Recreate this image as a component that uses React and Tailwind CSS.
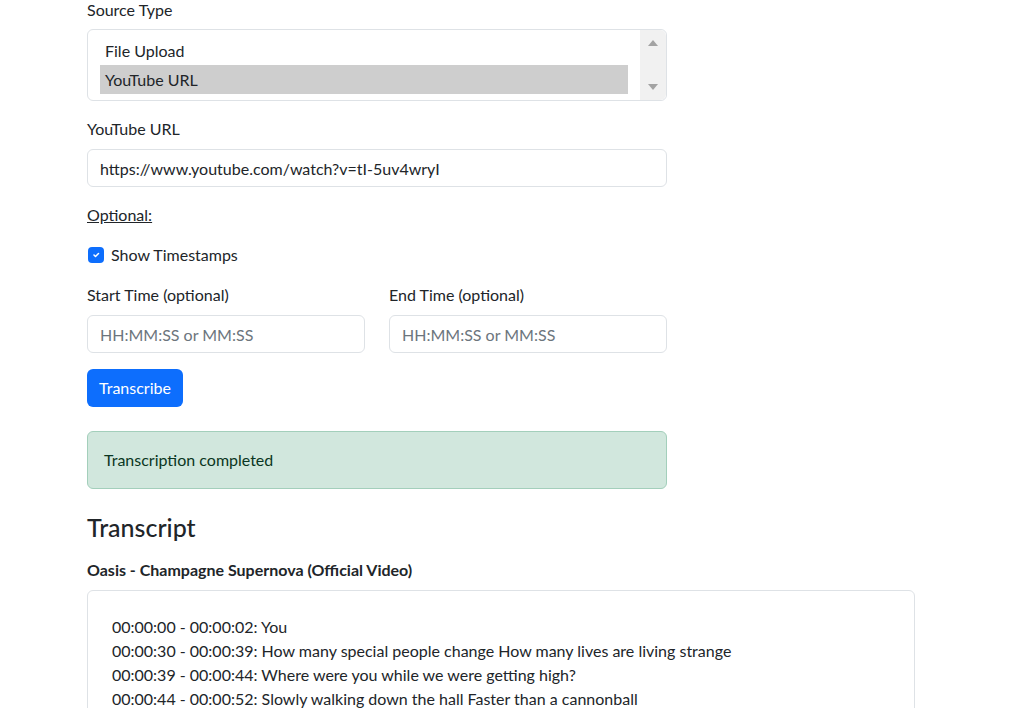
import { useState } from 'react';

const lines = [
  '00:00:00 - 00:00:02: You',
  '00:00:30 - 00:00:39: How many special people change How many lives are living strange',
  '00:00:39 - 00:00:44: Where were you while we were getting high?',
  '00:00:44 - 00:00:52: Slowly walking down the hall Faster than a cannonball',
];

export default function App() {
  const [source, setSource] = useState('youtube');
  const [showTs, setShowTs] = useState(true);

  return (
    <div className="h-[708px] overflow-hidden bg-white text-[16px] leading-6 text-[#212529] [font-family:'Segoe_UI',Lato,'Noto_Sans',sans-serif]">
      <div className="ml-[87px] mt-[-2px] w-[828px]">
        <div className="w-[580px]">
          {/* Source type */}
          <label className="mb-[7px] block">Source Type</label>
          <div className="flex h-[72px] rounded-md border border-[#dee2e6] bg-white">
            <div className="flex-1 pl-3 pt-[6px]">
              <div
                onClick={() => setSource('file')}
                className={`h-[29px] pl-[5px] leading-[29px] ${source === 'file' ? 'bg-[#cecece]' : ''}`}
              >
                File Upload
              </div>
              <div
                onClick={() => setSource('youtube')}
                className={`h-[29px] pl-[5px] leading-[29px] ${source === 'youtube' ? 'bg-[#cecece]' : ''}`}
              >
                YouTube URL
              </div>
            </div>
            <div className="ml-3 flex w-[26px] flex-col items-center justify-between rounded-r-md bg-[#f1f1f1] py-[10px]">
              <svg width="10" height="6" viewBox="0 0 10 6"><path d="M5 0L10 6H0z" fill="#a3a3a3" /></svg>
              <svg width="10" height="6" viewBox="0 0 10 6"><path d="M0 0h10L5 6z" fill="#a3a3a3" /></svg>
            </div>
          </div>

          {/* YouTube URL */}
          <label className="mt-[16px] mb-2 block">YouTube URL</label>
          <input
            defaultValue="https://www.youtube.com/watch?v=tI-5uv4wryI"
            className="block h-[38px] w-full rounded-md border border-[#dee2e6] px-3 text-[16px] text-[#212529] outline-none"
          />

          <div className="mt-4 underline">Optional:</div>

          <label className="mt-4 flex items-center gap-2">
            <span
              onClick={() => setShowTs(!showTs)}
              className={`ml-[1px] flex h-4 w-4 items-center justify-center rounded-[4px] ${showTs ? 'bg-[#0d6efd]' : 'border border-[#dee2e6]'}`}
            >
              {showTs && (
                <svg width="10" height="10" viewBox="0 0 20 20">
                  <path d="M6 10l3 3 6-6" fill="none" stroke="#fff" strokeWidth="3" strokeLinecap="round" strokeLinejoin="round" />
                </svg>
              )}
            </span>
            <span className="ml-[-1px]">Show Timestamps</span>
          </label>

          <div className="mt-4 grid grid-cols-2 gap-6">
            <div>
              <label className="mb-2 block">Start Time (optional)</label>
              <input
                placeholder="HH:MM:SS or MM:SS"
                className="block h-[38px] w-full rounded-md border border-[#dee2e6] px-3 text-[16px] outline-none placeholder:text-[#6c757d]"
              />
            </div>
            <div>
              <label className="mb-2 block">End Time (optional)</label>
              <input
                placeholder="HH:MM:SS or MM:SS"
                className="block h-[38px] w-full rounded-md border border-[#dee2e6] px-3 text-[16px] outline-none placeholder:text-[#6c757d]"
              />
            </div>
          </div>

          <button className="mt-4 h-[38px] rounded-md bg-[#0d6efd] px-3 text-white">Transcribe</button>

          <div className="mt-6 flex h-[58px] items-center rounded-md border border-[#a3cfbb] bg-[#d1e7dd] px-4 text-[#0a3622]">
            Transcription completed
          </div>
        </div>

        <h3 className="mt-[23px] text-[25px] font-medium leading-[1.2]">Transcript</h3>
        <div className="mt-4 font-bold">Oasis - Champagne Supernova (Official Video)</div>
        <div className="mt-2 rounded-md border border-[#dee2e6] px-6 pt-6 pb-4">
          {lines.map((l) => (
            <div key={l}>{l}</div>
          ))}
        </div>
      </div>
    </div>
  );
}
